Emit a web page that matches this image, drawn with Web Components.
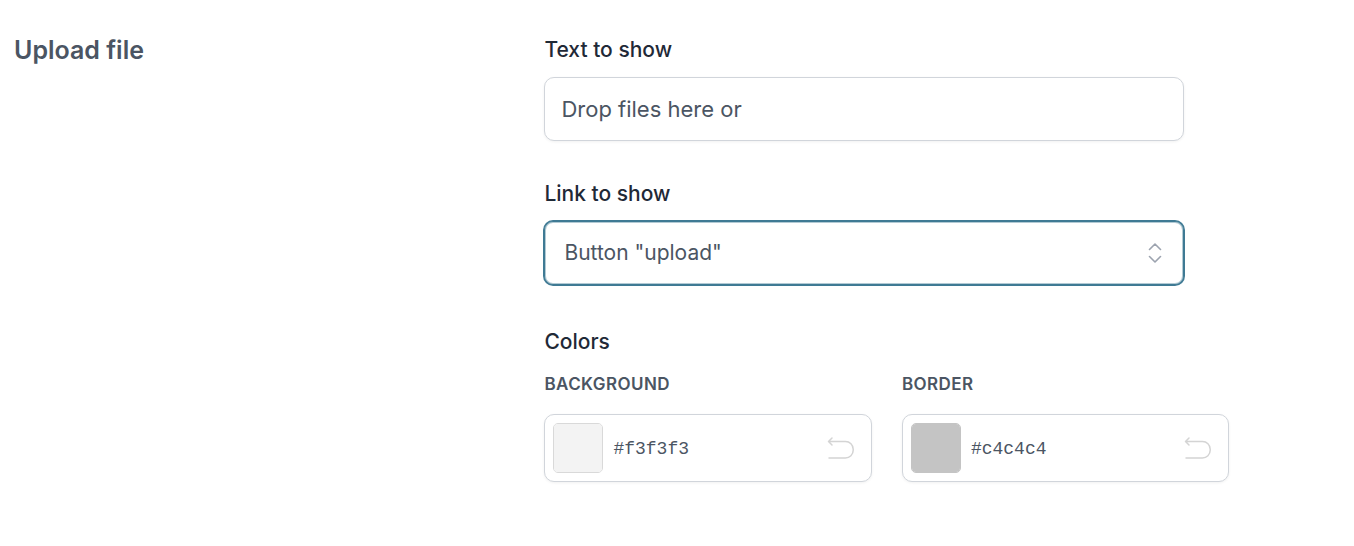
<!DOCTYPE html>
<html lang="en">
<head>
<meta charset="utf-8">
<meta name="viewport" content="width=device-width, initial-scale=1">
<title>Upload file settings</title>
<style>
  body {
    margin: 0;
    background: #fff;
    color: #4b5563;
    font-family: Inter, "Liberation Sans", sans-serif;
    --strong: #1f2937;
    --line: #d1d5db;
    --accent: #3f7a94;
    --shadow: 0 1px 3px rgba(0, 0, 0, .06);
  }
</style>
</head>
<body>
<settings-section heading="Upload file">
  <text-field label="Text to show" value="Drop files here or"></text-field>
  <select-field label="Link to show" options='Button "upload"|Text link'></select-field>
  <color-group label="Colors">
    <color-field label="Background" value="#f3f3f3" edge="#d9d9d9"></color-field>
    <color-field label="Border" value="#c4c4c4" edge="#c4c4c4"></color-field>
  </color-group>
</settings-section>

<script>
const LABEL = `
  * { box-sizing: border-box; }
  .label { display: block; margin: 0; padding: 0; font-size: 21px; line-height: 28px; font-weight: 500; color: var(--strong); }
`;

class SettingsSection extends HTMLElement {
  connectedCallback() {
    this.attachShadow({ mode: "open" }).innerHTML = `
      <style>
        :host { display: block; padding: 36px 14px; }
        section { display: grid; grid-template-columns: 2fr 3fr; }
        h2 { margin: 0; font-size: 25px; line-height: 28px; font-weight: 600; }
        .fields { display: flex; flex-direction: column; min-width: 0; }
      </style>
      <section><h2></h2><div class="fields"><slot></slot></div></section>`;
    this.shadowRoot.querySelector("h2").textContent = this.getAttribute("heading");
  }
}

class TextField extends HTMLElement {
  connectedCallback() {
    this.attachShadow({ mode: "open" }).innerHTML = `
      <style>${LABEL}
        :host { display: block; max-width: 640px; margin-bottom: 39px; }
        input {
          display: block; width: 100%; height: 64px; margin-top: 13px; padding: 0 16px;
          border: 1px solid var(--line); border-radius: 10px; background: #fff;
          box-shadow: var(--shadow); font: 22px/28px Inter, sans-serif; color: inherit;
        }
      </style>
      <label class="label" for="field"></label><input id="field" type="text">`;
    this.shadowRoot.querySelector("label").textContent = this.getAttribute("label");
    this.shadowRoot.querySelector("input").value = this.getAttribute("value");
  }
}

class SelectField extends HTMLElement {
  connectedCallback() {
    this.attachShadow({ mode: "open" }).innerHTML = `
      <style>${LABEL}
        :host { display: block; max-width: 640px; margin-bottom: 43px; }
        .box { display: grid; align-items: center; margin-top: 13px; }
        select, svg { grid-area: 1 / 1; }
        select {
          width: 100%; height: 64px; padding: 0 48px 0 19px; appearance: none;
          border: 1px solid var(--accent); border-radius: 9px; background: #fff; outline: none;
          box-shadow: 0 0 0 1px var(--accent), inset 0 0 0 1px rgba(63, 122, 148, .4);
          font: 21px/28px Inter, sans-serif; color: inherit;
        }
        svg { justify-self: end; margin-right: 20px; width: 18px; height: 24px; pointer-events: none; }
      </style>
      <label class="label" for="field"></label>
      <div class="box">
        <select id="field"></select>
        <svg viewBox="0 0 18 24" fill="none" stroke="#9ca3af" stroke-width="1.6" stroke-linecap="round" stroke-linejoin="round" aria-hidden="true"><path d="M3.500 8.500L9 3l5.500 5.500M3.500 15.500L9 21l5.500-5.500"/></svg>
      </div>`;
    this.shadowRoot.querySelector("label").textContent = this.getAttribute("label");
    const select = this.shadowRoot.querySelector("select");
    for (const name of this.getAttribute("options").split("|")) select.add(new Option(name));
  }
}

class ColorGroup extends HTMLElement {
  connectedCallback() {
    this.attachShadow({ mode: "open" }).innerHTML = `
      <style>${LABEL}
        :host { display: block; max-width: 685px; }
        fieldset { margin: 0; padding: 0; border: 0; min-width: 0; }
        .row { display: grid; grid-template-columns: 1fr 1fr; gap: 30px; margin-top: 16px; }
      </style>
      <fieldset><legend class="label"></legend><div class="row"><slot></slot></div></fieldset>`;
    this.shadowRoot.querySelector("legend").textContent = this.getAttribute("label");
  }
}

class ColorField extends HTMLElement {
  connectedCallback() {
    const name = this.getAttribute("label"), initial = this.getAttribute("value");
    this.attachShadow({ mode: "open" }).innerHTML = `
      <style>
        * { box-sizing: border-box; }
        :host { display: block; min-width: 0; }
        label { display: block; font-size: 17px; line-height: 24px; font-weight: 600; text-transform: uppercase; letter-spacing: .025em; }
        .box {
          display: flex; align-items: center; gap: 10px; height: 68px; margin-top: 18px; padding: 0 16px 0 8px;
          border: 1px solid var(--line); border-radius: 10px; background: #fff; box-shadow: var(--shadow);
        }
        input[type=color] {
          flex: none; width: 50px; height: 50px; padding: 0; appearance: none;
          border: 1px solid ${this.getAttribute("edge")}; border-radius: 5px; background: none; overflow: hidden;
        }
        input::-webkit-color-swatch-wrapper { padding: 0; }
        input::-webkit-color-swatch { border: 0; border-radius: 0; }
        input[type=text] {
          flex: 1; min-width: 0; padding: 2px 0 0; border: 0; outline: none; background: none;
          font: 18px/24px "Liberation Mono", monospace; color: inherit;
        }
        button { flex: none; display: flex; padding: 0; border: 0; background: none; cursor: pointer; }
        svg { width: 28px; height: 24px; }
      </style>
      <label for="hex"></label>
      <div class="box">
        <input type="color"><input id="hex" type="text">
        <button type="button"><svg viewBox="0 0 28 24" fill="none" stroke="#d4d4d4" stroke-width="1.5" stroke-linecap="round" stroke-linejoin="round" aria-hidden="true"><path d="M2 5.500H18.500a7.700 7.700 0 0 1 7.700 7.700v1.100a7.700 7.700 0 0 1-7.700 7.700H2M5 2L1.500 5.500L5 9"/></svg></button>
      </div>`;
    const [color, hex] = this.shadowRoot.querySelectorAll("input");
    const button = this.shadowRoot.querySelector("button");
    this.shadowRoot.querySelector("label").textContent = name;
    color.setAttribute("aria-label", name + " color");
    button.setAttribute("aria-label", "Reset " + name);
    const set = value => { color.value = hex.value = value; };
    set(initial);
    color.addEventListener("input", () => set(color.value));
    hex.addEventListener("change", () => { color.value = hex.value; });
    button.addEventListener("click", () => set(initial));
  }
}

customElements.define("settings-section", SettingsSection);
customElements.define("text-field", TextField);
customElements.define("select-field", SelectField);
customElements.define("color-group", ColorGroup);
customElements.define("color-field", ColorField);
</script>
</body>
</html>
